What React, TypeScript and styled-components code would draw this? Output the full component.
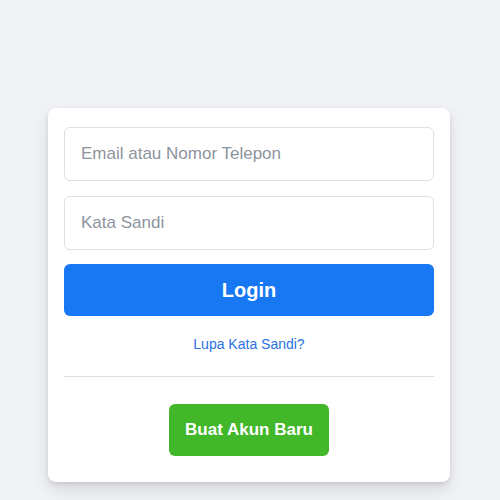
import React from "react";
import styled, { createGlobalStyle } from "styled-components";

const Global = createGlobalStyle`
  html, body {
    margin: 0;
    padding: 0;
    background: #f0f2f5;
    font-family: "Liberation Sans", Arial, Helvetica, sans-serif;
  }
  * { box-sizing: border-box; }
`;

const Page = styled.div`
  min-height: 500px;
  padding: 108px 50px 0 48px;
  display: flex;
  justify-content: center;
  align-items: flex-start;
`;

const Card = styled.div`
  width: 402px;
  background: #ffffff;
  border-radius: 8px;
  box-shadow: 0 2px 4px rgba(0, 0, 0, 0.1), 0 8px 16px rgba(0, 0, 0, 0.1);
  padding: 19px 16px 26px;
  display: flex;
  flex-direction: column;
  align-items: stretch;
`;

const Form = styled.form`
  display: flex;
  flex-direction: column;
  gap: 14.5px;
  margin: 0;
`;

const Input = styled.input`
  height: 54px;
  width: 100%;
  border: 1px solid #dddfe2;
  border-radius: 6px;
  padding: 0 16px;
  font-family: inherit;
  font-size: 17px;
  color: #1c1e21;
  background: #fff;
  outline: none;
  &::placeholder {
    color: #8d949e;
  }
`;

const LoginButton = styled.button`
  height: 52px;
  border: none;
  border-radius: 6px;
  background: #1877f2;
  color: #fff;
  font-family: inherit;
  font-size: 20px;
  font-weight: bold;
  cursor: pointer;
`;

const Forgot = styled.a`
  display: block;
  margin-top: 20px;
  text-align: center;
  font-size: 14px;
  line-height: 16px;
  color: #2a72e0;
  text-decoration: none;
`;

const Divider = styled.div`
  height: 1px;
  background: #dadde1;
  margin-top: 24px;
`;

const CreateRow = styled.div`
  display: flex;
  justify-content: center;
  margin-top: 27px;
`;

const CreateButton = styled.button`
  height: 52px;
  padding: 0 16px;
  border: none;
  border-radius: 6px;
  background: #42b72a;
  color: #fff;
  font-family: inherit;
  font-size: 17px;
  font-weight: bold;
  cursor: pointer;
`;

export default function App() {
  return (
    <>
      <Global />
      <Page>
        <Card>
          <Form onSubmit={(e) => e.preventDefault()}>
            <Input type="text" placeholder="Email atau Nomor Telepon" />
            <Input type="password" placeholder="Kata Sandi" />
            <LoginButton type="submit">Login</LoginButton>
          </Form>
          <Forgot href="#">Lupa Kata Sandi?</Forgot>
          <Divider />
          <CreateRow>
            <CreateButton type="button">Buat Akun Baru</CreateButton>
          </CreateRow>
        </Card>
      </Page>
    </>
  );
}
